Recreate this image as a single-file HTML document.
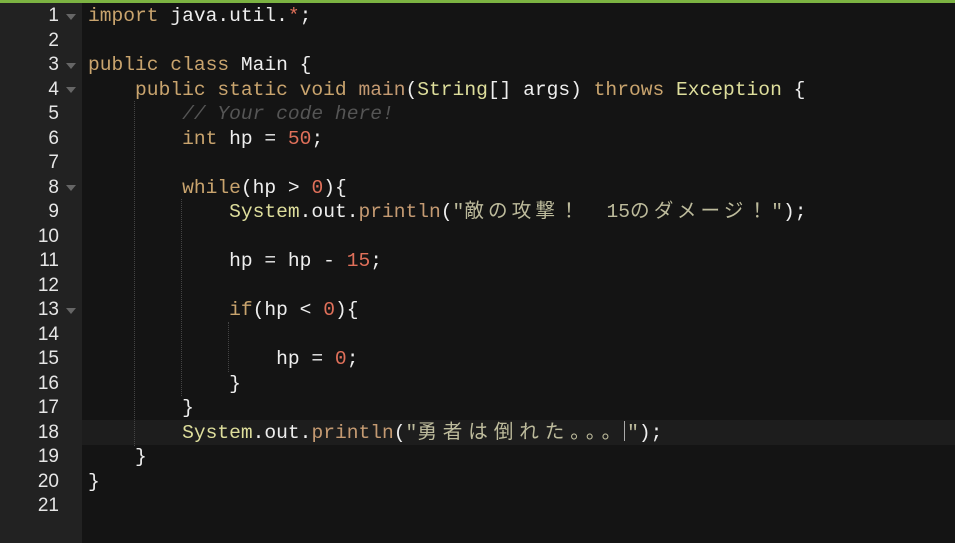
<!DOCTYPE html>
<html><head><meta charset="utf-8"><style>
body{margin:0;width:955px;height:543px;background:#141414;overflow:hidden;position:relative;font-family:"Liberation Mono","Noto Sans CJK JP",monospace;font-size:19.6px;}
#bar{position:absolute;left:0;top:0;width:955px;height:3px;background:#7cb342;}
#gut{position:absolute;left:0;top:3px;width:82px;height:540px;background:#222;}
.hl{position:absolute;left:82px;top:420px;width:873px;height:25px;background:#1d1d1d;}
.ln{position:absolute;left:0;width:59px;text-align:right;color:#e6e6e6;height:24.5px;line-height:24.5px;font-family:"Liberation Sans",sans-serif;font-size:19px;}
.f{position:absolute;left:66px;width:0;height:0;border-left:5px solid transparent;border-right:5px solid transparent;border-top:6px solid #666;}
.c{position:absolute;left:88px;white-space:pre;color:#eee;height:24.5px;line-height:24.5px;}
.k{color:#c9a46e}.n{color:#e0705a}.s{color:#bdbb9c}.cm{color:#555;font-style:italic}.y{color:#dede9c}.p{color:#c49a72}
.j{letter-spacing:4.1px}
.j2{letter-spacing:5.9px}
.cur{display:inline-block;width:1px;height:20px;background:#aaa;vertical-align:-3px;margin-left:-3px;margin-right:2px}
.g{position:absolute;width:0;border-left:1px dotted #444;}
</style></head><body>
<div id="bar"></div><div id="gut"></div><div class="hl"></div>
<div class="g" style="left:134px;top:101px;height:345px"></div>
<div class="g" style="left:181px;top:199px;height:197px"></div>
<div class="g" style="left:228px;top:322px;height:50px"></div>
<div class="ln" style="top:4px">1</div><div class="ln" style="top:28.5px">2</div><div class="ln" style="top:53px">3</div><div class="ln" style="top:77.5px">4</div><div class="ln" style="top:102px">5</div><div class="ln" style="top:126.5px">6</div><div class="ln" style="top:151px">7</div><div class="ln" style="top:175.5px">8</div><div class="ln" style="top:200px">9</div><div class="ln" style="top:224.5px">10</div><div class="ln" style="top:249px">11</div><div class="ln" style="top:273.5px">12</div><div class="ln" style="top:298px">13</div><div class="ln" style="top:322.5px">14</div><div class="ln" style="top:347px">15</div><div class="ln" style="top:371.5px">16</div><div class="ln" style="top:396px">17</div><div class="ln" style="top:420.5px">18</div><div class="ln" style="top:445px">19</div><div class="ln" style="top:469.5px">20</div><div class="ln" style="top:494px">21</div>
<div class="f" style="top:14px"></div><div class="f" style="top:63px"></div><div class="f" style="top:87px"></div><div class="f" style="top:185px"></div><div class="f" style="top:308px"></div>
<div class="c" style="top:4px"><span class="k">import</span> java.util.<span class="n">*</span>;</div>
<div class="c" style="top:53px"><span class="k">public class</span> Main {</div>
<div class="c" style="top:77.5px">    <span class="k">public static void</span> <span class="p">main</span>(<span class="y">String</span>[] args) <span class="k">throws</span> <span class="y">Exception</span> {</div>
<div class="c" style="top:102px">        <span class="cm">// Your code here!</span></div>
<div class="c" style="top:126.5px">        <span class="k">int</span> hp = <span class="n">50</span>;</div>
<div class="c" style="top:175.5px">        <span class="k">while</span>(hp &gt; <span class="n">0</span>){</div>
<div class="c" style="top:200px">            <span class="y">System</span>.out.<span class="p">println</span>(<span class="s">"<span class="j">敵の攻撃！　</span>15<span class="j">のダメージ！</span>"</span>);</div>
<div class="c" style="top:249px">            hp = hp - <span class="n">15</span>;</div>
<div class="c" style="top:298px">            <span class="k">if</span>(hp &lt; <span class="n">0</span>){</div>
<div class="c" style="top:347px">                hp = <span class="n">0</span>;</div>
<div class="c" style="top:371.5px">            }</div>
<div class="c" style="top:396px">        }</div>
<div class="c" style="top:420.5px">        <span class="y">System</span>.out.<span class="p">println</span>(<span class="s">"<span class="j2">勇者は倒れた。。。</span><span class="cur"></span>"</span>);</div>
<div class="c" style="top:445px">    }</div>
<div class="c" style="top:469.5px">}</div>
</body></html>
